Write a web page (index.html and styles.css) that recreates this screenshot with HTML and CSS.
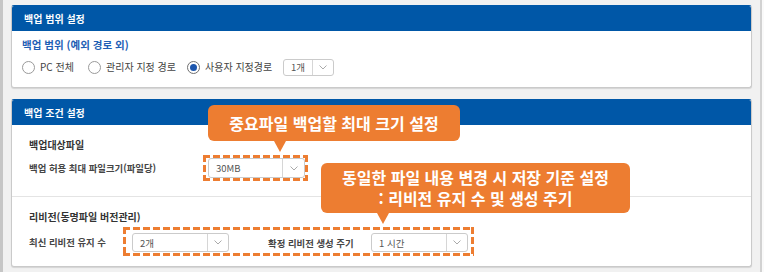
FILE: index.html
```html
<!DOCTYPE html>
<html lang="ko">
<head>
<meta charset="utf-8">
<title>백업 설정</title>
<link rel="stylesheet" href="styles.css">
</head>
<body>
<div class="screen">
  <section class="panel p1">
    <div class="panel-head">백업 범위 설정</div>
    <div class="panel-body">
      <div class="sub-title">백업 범위 (예외 경로 외)</div>
      <div class="radio-row">
        <label class="radio r1"><span class="circle"></span>PC 전체</label>
        <label class="radio r2"><span class="circle"></span>관리자 지정 경로</label>
        <label class="radio r3"><span class="circle on"></span>사용자 지정경로</label>
        <div class="select s-count"><span class="val">1개</span><span class="arrow"><svg width="8" height="5" viewBox="0 0 8 5"><path d="M0.5 0.5 L4 4 L7.5 0.5" fill="none" stroke="#aaa" stroke-width="1"/></svg></span></div>
      </div>
    </div>
  </section>

  <section class="panel p2">
    <div class="panel-head">백업 조건 설정</div>
    <div class="section sec1">
      <div class="sec-title">백업대상파일</div>
      <div class="row">
        <span class="lbl lbl-size">백업 허용 최대 파일크기(파일당)</span>
        <div class="dash dash1">
          <div class="select s-size"><span class="val">30MB</span><span class="arrow"><svg width="8" height="5" viewBox="0 0 8 5"><path d="M0.5 0.5 L4 4 L7.5 0.5" fill="none" stroke="#aaa" stroke-width="1"/></svg></span></div>
        </div>
      </div>
    </div>
    <div class="section sec2">
      <div class="sec-title">리비전(동명파일 버전관리)</div>
      <div class="row">
        <span class="lbl lbl-keep">최신 리비전 유지 수</span>
        <div class="dash dash2">
          <div class="select s-rev"><span class="val">2개</span><span class="arrow"><svg width="8" height="5" viewBox="0 0 8 5"><path d="M0.5 0.5 L4 4 L7.5 0.5" fill="none" stroke="#aaa" stroke-width="1"/></svg></span></div>
          <span class="lbl lbl-cycle">확정 리비전 생성 주기</span>
          <div class="select s-rev"><span class="val">1 시간</span><span class="arrow"><svg width="8" height="5" viewBox="0 0 8 5"><path d="M0.5 0.5 L4 4 L7.5 0.5" fill="none" stroke="#aaa" stroke-width="1"/></svg></span></div>
        </div>
      </div>
    </div>

    <div class="callout c1">중요파일 백업할 최대 크기 설정</div>
    <div class="callout c2">동일한 파일 내용 변경 시 저장 기준 설정<br>: 리비전 유지 수 및 생성 주기</div>
  </section>
</div>
</body>
</html>
```

FILE: styles.css
```css
* { box-sizing: border-box; }

html, body {
  margin: 0;
  padding: 0;
  background: #fafafa;
}

body {
  font-family: "Noto Sans CJK KR", "Noto Sans", sans-serif;
  width: 764px;
  height: 272px;
  overflow: hidden;
}

.screen {
  width: 762px;
  height: 272px;
  background: #f1f1f1;
  border-left: 3px solid #c6c6c6;
  border-right: 2px solid #d2d2d2;
  padding: 5px 0 0 8px;
}

.panel {
  width: 741px;
  background: #fff;
  border: 1px solid #cacaca;
  border-top-color: #0057a7;
  border-radius: 3px;
  box-shadow: 0 1px 1px rgba(0,0,0,0.12);
}

.p2 {
  margin-top: 11px;
  position: relative;
}

.panel-head {
  height: 25px;
  background: #0057a7;
  color: #fff;
  font-size: 10px;
  font-weight: 700;
  line-height: 25px;
  padding-left: 12px;
  border-radius: 2px 2px 0 0;
}

.panel-body {
  padding: 6px 0 10px 10px;
}

.sub-title {
  font-size: 10.5px;
  font-weight: 700;
  color: #1f5fb5;
  line-height: 16px;
}

.radio-row {
  margin-top: 4px;
  height: 20px;
  display: flex;
  align-items: center;
}

.radio {
  display: flex;
  align-items: center;
  font-size: 10px;
  color: #444;
  line-height: 14px;
}

.r1 { width: 66px; }
.r2 { width: 99px; }
.r3 { width: 96px; }

.circle {
  width: 13px;
  height: 13px;
  border: 1px solid #9a9a9a;
  border-radius: 50%;
  background: #fff;
  margin-right: 5px;
  display: flex;
  align-items: center;
  justify-content: center;
  flex: none;
}

.circle.on { border-color: #6f6f6f; }
.circle.on::after {
  content: "";
  width: 7px;
  height: 7px;
  border-radius: 50%;
  background: #1c56ad;
}

.select {
  display: flex;
  align-items: stretch;
  background: #fff;
  border: 1px solid #cbcbcb;
  border-radius: 3px;
  flex: none;
}

.select .val {
  flex: 1;
  font-size: 9.5px;
  color: #555;
  display: flex;
  align-items: center;
  padding-left: 7px;
}

.select .arrow {
  width: 21px;
  border-left: 1px solid #d6d6d6;
  display: flex;
  align-items: center;
  justify-content: center;
}

.s-count { width: 51px; height: 17px; }
.s-size { width: 97px; height: 20px; }
.s-size .arrow { width: 22px; }
.s-rev { width: 97px; height: 19px; }

.section {
  padding-left: 17px;
}

.sec1 {
  padding-top: 13px;
  padding-bottom: 15px;
  border-bottom: 1px solid #e4e4e4;
}

.sec2 {
  padding-top: 13px;
  padding-bottom: 10px;
}

.sec-title {
  font-size: 10px;
  font-weight: 700;
  color: #333;
  line-height: 14px;
}

.row {
  margin-top: 3px;
  display: flex;
  align-items: center;
}

.lbl {
  font-size: 9.4px;
  font-weight: 700;
  color: #454545;
  line-height: 14px;
  flex: none;
}

.lbl-size { width: 174px; }
.lbl-keep { width: 94px; }
.lbl-cycle { width: 103px; margin-left: 39px; }

.dash {
  display: flex;
  align-items: center;
  padding: 3px;
  background:
    repeating-linear-gradient(90deg, #ed7d31 0 7px, transparent 7px 10px) top left / 100% 3px no-repeat,
    repeating-linear-gradient(90deg, #ed7d31 0 7px, transparent 7px 10px) bottom left / 100% 3px no-repeat,
    repeating-linear-gradient(180deg, #ed7d31 0 7px, transparent 7px 10px) top left / 3px 100% no-repeat,
    repeating-linear-gradient(180deg, #ed7d31 0 7px, transparent 7px 10px) top right / 3px 100% no-repeat;
}

.dash1 {
  height: 26px;
  padding: 3px 0 3px 5px;
  width: 105px;
}

.dash2 {
  height: 29px;
  width: 351px;
  padding: 4px 3px 2px 9px;
}

.callout {
  position: absolute;
  background: #ed7d31;
  color: #fff;
  font-weight: 700;
  font-size: 16px;
  border-radius: 6px;
  text-align: center;
  display: flex;
  align-items: center;
  justify-content: center;
}

.callout::after {
  content: "";
  position: absolute;
  top: 100%;
  border-left: 6px solid transparent;
  border-right: 6px solid transparent;
  border-top: 11px solid #ed7d31;
}

.c1 {
  left: 196px;
  top: 5px;
  width: 252px;
  height: 36px;
  line-height: 20px;
}
.c1::after { left: 66px; }

.c2 {
  left: 309px;
  top: 63px;
  width: 309px;
  height: 50px;
  line-height: 21px;
}
.c2::after { left: 56px; }
```
